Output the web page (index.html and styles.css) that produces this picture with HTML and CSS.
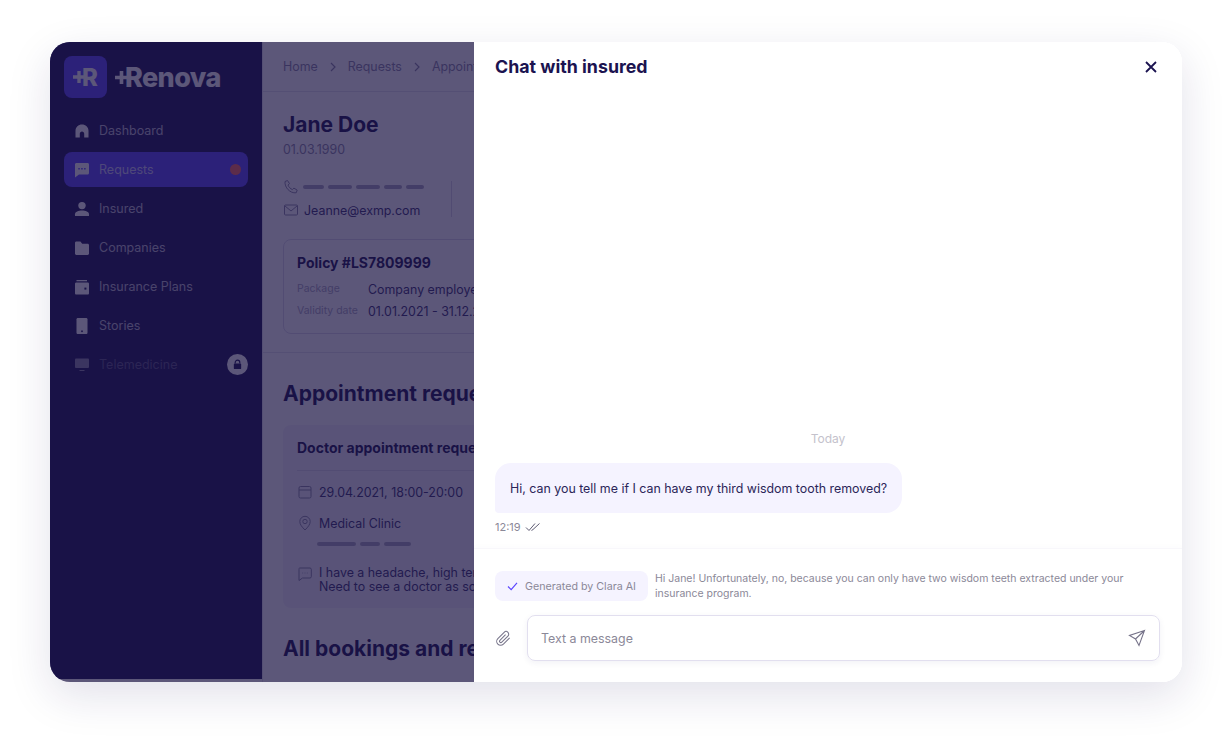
FILE: index.html
```html
<!DOCTYPE html>
<html lang="en">
<head>
  <meta charset="UTF-8">
  <title>Chat with insured</title>
  <link rel="stylesheet" href="styles.css">
</head>
<body>
  <div class="window">
    <aside class="sidebar">
      <div class="logo">
        <div class="logo-tile">
          <svg class="logo-plus-small" viewBox="0 0 10 10"><path d="M3.6 0h2.8v3.6H10v2.8H6.400V10H3.6V6.400H0V3.600h3.600z"/></svg>
          <span>R</span>
        </div>
        <div class="logo-name">
          <svg class="logo-plus" viewBox="0 0 10 10"><path d="M3.6 0h2.800v3.600H10v2.800H6.400V10H3.600V6.400H0V3.600h3.600z"/></svg>
          <span>Renova</span>
        </div>
      </div>
      <nav class="nav">
        <a class="nav-item" href="#">
          <svg viewBox="0 0 16 16"><path d="M8 1.500c-3.600 0-6.500 2.700-6.500 6.200v6.800h4.300v-3.800c0-1.200 1-2.200 2.200-2.200s2.200 1 2.200 2.200v3.800h4.300V7.700c0-3.500-2.900-6.200-6.500-6.200z"/></svg>
          Dashboard
        </a>
        <a class="nav-item active" href="#">
          <svg viewBox="0 0 16 16"><path d="M2.500 1h11C14.400 1 15 1.600 15 2.500v8.500c0 .9-.6 1.500-1.500 1.500H5L1 15.500v-13C1 1.600 1.600 1 2.500 1z"/><g class="dots"><rect x="4.300" y="6" width="1.500" height="1.500"/><rect x="7.200" y="6" width="1.500" height="1.500"/><rect x="10.100" y="6" width="1.500" height="1.500"/></g></svg>
          Requests
          <span class="nav-dot"></span>
        </a>
        <a class="nav-item" href="#">
          <svg viewBox="0 0 16 16"><circle cx="8" cy="4.600" r="3.700"/><path d="M1 15v-1.800c0-2.400 3.500-3.700 7-3.700s7 1.300 7 3.700V15z"/></svg>
          Insured
        </a>
        <a class="nav-item" href="#">
          <svg viewBox="0 0 16 16"><path d="M1 3c0-.8.600-1.400 1.400-1.400h4l1.800 2.200h5.400c.8 0 1.400.6 1.400 1.400v8.400c0 .8-.6 1.400-1.400 1.400H2.400c-.8 0-1.400-.6-1.400-1.400z"/></svg>
          Companies
        </a>
        <a class="nav-item" href="#">
          <svg viewBox="0 0 16 16"><path d="M2.500 1H13v1.300H2.500z"/><path d="M2.300 3.500h11.400c.8 0 1.300.6 1.300 1.300v9.400c0 .8-.5 1.300-1.300 1.300H2.300c-.8 0-1.300-.5-1.300-1.300V4.800c0-.7.500-1.300 1.300-1.300z"/><rect class="dots" x="10.400" y="8.600" width="2" height="2"/></svg>
          Insurance Plans
        </a>
        <a class="nav-item" href="#">
          <svg viewBox="0 0 16 16"><path d="M3.800 0h8.400c.7 0 1.300.6 1.300 1.300v13.400c0 .7-.6 1.300-1.300 1.300H3.800c-.7 0-1.300-.6-1.300-1.300V1.300C2.500.6 3.100 0 3.800 0z"/><rect class="dots" x="7.200" y="12.500" width="1.600" height="1.600"/></svg>
          Stories
        </a>
        <a class="nav-item disabled" href="#">
          <svg viewBox="0 0 16 16"><path d="M1.900 1.500h12.200c.5 0 .9.400.9.900v7.700c0 .5-.4.900-.9.900H1.900c-.5 0-.9-.4-.9-.9V2.400c0-.5.400-.9.900-.9z"/><rect x="5.500" y="13" width="5" height="1"/></svg>
          Telemedicine
          <span class="nav-lock">
            <svg viewBox="0 0 12 12"><path d="M3.500 5V3.700C3.500 2.300 4.600 1.300 6 1.300s2.500 1 2.500 2.400V5" class="lock-arc"/><rect x="2" y="5" width="8" height="6" rx="1"/></svg>
          </span>
        </a>
      </nav>
    </aside>

    <main class="main">
      <div class="crumbs">
        <span>Home</span>
        <svg class="crumb-arrow" viewBox="0 0 8 10"><path d="M2 1l4 4-4 4"/></svg>
        <span>Requests</span>
        <svg class="crumb-arrow" viewBox="0 0 8 10"><path d="M2 1l4 4-4 4"/></svg>
        <span>Appoint</span>
      </div>

      <section class="profile">
        <h1>Jane Doe</h1>
        <div class="birth">01.03.1990</div>
        <div class="contacts">
          <div class="contact-list">
            <div class="contact-row">
              <svg class="line-icon" viewBox="0 0 16 16"><path d="M2 2.500L4.500 1.500l2 3.200-1.500 1.400c.8 2 2.400 3.600 4.400 4.500l1.500-1.500 3.300 2-1 2.700C7 14.500 1.500 8.500 2 2.500z"/></svg>
              <div class="dashes">
                <i class="dash-a"></i><i class="dash-b"></i><i class="dash-b"></i><i class="dash-c"></i><i class="dash-c"></i>
              </div>
            </div>
            <div class="contact-row">
              <svg class="line-icon" viewBox="0 0 16 16"><rect x="1.500" y="3" width="13" height="10" rx="1"/><path d="M1.800 3.800L8 9l6.200-5.200"/></svg>
              <span>Jeanne@exmp.com</span>
            </div>
          </div>
          <div class="contact-divider"></div>
        </div>
        <div class="policy">
          <h3>Policy #LS7809999</h3>
          <div class="policy-row"><span class="policy-label">Package</span><span>Company employee</span></div>
          <div class="policy-row"><span class="policy-label">Validity date</span><span>01.01.2021 - 31.12.2021</span></div>
        </div>
      </section>

      <section class="requests">
        <h2>Appointment requests</h2>
        <div class="request-card">
          <h3>Doctor appointment request</h3>
          <div class="request-info">
            <div class="info-row">
              <svg class="line-icon" viewBox="0 0 16 16"><rect x="2" y="2.500" width="12" height="11.500" rx="1.500"/><path d="M2 6h12"/></svg>
              <span>29.04.2021, 18:00-20:00</span>
            </div>
            <div class="info-row">
              <svg class="line-icon" viewBox="0 0 16 16"><path d="M8 15C5 12 2.800 9.500 2.800 6.500a5.200 5.200 0 0 1 10.400 0C13.200 9.500 11 12 8 15z"/><circle cx="8" cy="6.500" r="2.200"/></svg>
              <span>Medical Clinic</span>
            </div>
            <div class="clinic-dashes"><i class="bar-a"></i><i class="bar-b"></i><i class="bar-c"></i></div>
            <div class="info-row note">
              <svg class="line-icon" viewBox="0 0 16 16"><path d="M3 2h10c.8 0 1.300.5 1.300 1.300v7.400c0 .8-.5 1.300-1.300 1.300H5.500L2 14.500V3.300C1.700 2.500 2.200 2 3 2z"/><path d="M5.500 7h.6M7.700 7h.6M9.900 7h.6"/></svg>
              <span>I have a headache, high ter<br>Need to see a doctor as so</span>
            </div>
          </div>
        </div>
        <h2 class="bookings">All bookings and requests</h2>
      </section>
    </main>

    <div class="overlay"></div>

    <section class="chat">
      <header class="chat-head">
        <h2>Chat with insured</h2>
        <button class="chat-close" type="button" aria-label="Close">
          <svg viewBox="0 0 12 12"><path d="M1 1l10 10M11 1L1 11"/></svg>
        </button>
      </header>
      <div class="chat-body">
        <div class="chat-day">Today</div>
        <div class="bubble">Hi, can you tell me if I can have my third wisdom tooth removed?</div>
        <div class="msg-meta">
          <span>12:19</span>
          <svg viewBox="0 0 16 10"><path d="M1 5.500l3 3L10 1.500M6.500 8.500L8 7.500 14.500 1.500"/></svg>
        </div>
      </div>
      <footer class="chat-foot">
        <div class="suggest">
          <div class="suggest-chip">
            <svg viewBox="0 0 12 10"><path d="M1 5l3.500 3.500L11 1"/></svg>
            Generated by Clara AI
          </div>
          <p>Hi Jane! Unfortunately, no, because you can only have two wisdom teeth extracted under your insurance program.</p>
        </div>
        <div class="compose">
          <svg class="clip" viewBox="0 0 18 18"><path d="M15.500 8.300l-6.600 6.600c-1.700 1.700-4.300 1.700-5.900 0-1.600-1.600-1.600-4.200 0-5.800l6.700-6.700c1.100-1.100 2.900-1.100 4 0s1.100 2.900 0 4l-6.500 6.500c-.6.600-1.400.6-2 0-.5-.5-.5-1.400 0-1.900l6-6"/></svg>
          <div class="compose-box">
            <span>Text a message</span>
            <svg class="send" viewBox="0 0 18 18"><path d="M16.500 1.500L1.500 6.500l6 3.500 3.500 6.500zM16.500 1.500L7.500 10"/></svg>
          </div>
        </div>
      </footer>
    </section>
  </div>
</body>
</html>
```

FILE: styles.css
```css
* {
  box-sizing: border-box;
}
html, body {
  height: 100%;
}
body {
  margin: 0;
  padding: 42px 50px 59px;
  background: #fff;
  font-family: Inter, "Liberation Sans", sans-serif;
  color: #1b1350;
  overflow: hidden;
}
h1, h2, h3, p {
  margin: 0;
}
svg {
  display: block;
  flex: none;
}

.window {
  position: relative;
  display: flex;
  height: 640px;
  border-radius: 20px;
  overflow: hidden;
  background: #fff;
  box-shadow: 0 14px 44px rgba(30,20,90,.13);
}

/* sidebar */
.sidebar {
  width: 212px;
  flex: none;
  margin-bottom: 3px;
  padding: 14px 14px 0;
  background: #1a1254;
}
.logo {
  display: flex;
  align-items: center;
  gap: 8px;
  margin-bottom: 15px;
}
.logo-tile {
  width: 43px;
  height: 42px;
  display: flex;
  align-items: center;
  justify-content: center;
  border-radius: 8px;
  background: #5a45ff;
  color: #fff;
  font-weight: 800;
  font-size: 24px;
}
.logo-plus-small {
  width: 12px;
  height: 12px;
  margin-right: -3px;
  fill: #fff;
}
.logo-name {
  display: flex;
  align-items: center;
  color: #fff;
  font-weight: 800;
  font-size: 27px;
  letter-spacing: -.6px;
}
.logo-plus {
  width: 13px;
  height: 13px;
  margin-right: -3px;
  fill: #fff;
}
.nav {
  display: flex;
  flex-direction: column;
  gap: 4px;
}
.nav-item {
  display: flex;
  align-items: center;
  gap: 9px;
  height: 35px;
  padding: 0 7px 0 10px;
  border-radius: 8px;
  color: rgba(255,255,255,.72);
  font-size: 12.500px;
  text-decoration: none;
}
.nav-item svg {
  width: 16px;
  height: 16px;
  fill: #fff;
}
.nav-item .dots {
  fill: #1a1254;
}
.nav-item.active {
  background: #5a45ff;
}
.nav-item.active .dots {
  fill: #5a45ff;
}
.nav-dot {
  width: 11px;
  height: 11px;
  margin-left: auto;
  border-radius: 50%;
  background: #ff6b5e;
}
.nav-item.disabled {
  color: rgba(255,255,255,.28);
  padding-right: 0;
}
.nav-item.disabled > svg {
  opacity: .5;
}
.nav-lock {
  width: 21px;
  height: 21px;
  margin-left: auto;
  display: flex;
  align-items: center;
  justify-content: center;
  border-radius: 50%;
  background: #fff;
}
.nav-lock svg {
  width: 11px;
  height: 11px;
  fill: #1a1254;
}
.nav-lock .lock-arc {
  fill: none;
  stroke: #1a1254;
  stroke-width: 1.300;
}

/* page under the overlay */
.main {
  flex: 1;
  min-width: 0;
  background: #fff;
  border-left: 1px solid #e4e2ee;
  white-space: nowrap;
  overflow: hidden;
  font-size: 12.400px;
  color: #3a3270;
}
.crumbs {
  display: flex;
  align-items: center;
  gap: 11px;
  height: 50px;
  padding: 0 20px;
  border-bottom: 1px solid #e4e2ee;
  color: #8b88a6;
}
.crumb-arrow {
  width: 8px;
  height: 10px;
  fill: none;
  stroke: #8b88a6;
  stroke-width: 1.200;
}
.line-icon {
  width: 16px;
  height: 16px;
  fill: none;
  stroke: #8b88a6;
  stroke-width: 1;
}
.profile {
  padding: 20px 20px 18px;
  border-bottom: 1px solid #e4e2ee;
}
.profile h1 {
  font-size: 21px;
  line-height: 26px;
  font-weight: 700;
  color: #1b1350;
}
.birth {
  margin-top: 4px;
  line-height: 16px;
  color: #8b88a6;
}
.contacts {
  display: flex;
  align-items: center;
  gap: 27px;
  margin-top: 21px;
}
.contact-list {
  display: flex;
  flex-direction: column;
  gap: 7px;
}
.contact-row {
  display: flex;
  align-items: center;
  gap: 4px;
  height: 16px;
}
.contact-row span {
  margin-left: 1px;
}
.dashes {
  display: flex;
  gap: 4px;
}
.dashes i, .clinic-dashes i {
  display: block;
  height: 3.500px;
  border-radius: 2px;
  background: #aaa7c0;
}
.dash-a { width: 21px; }
.dash-b { width: 24px; }
.dash-c { width: 18px; }
.contact-divider {
  width: 1px;
  height: 36px;
  background: #d8d6e6;
}
.policy {
  width: 400px;
  height: 95px;
  margin-top: 21px;
  padding: 14px 13px;
  border: 1px solid #dcdaea;
  border-radius: 8px;
}
.policy h3, .request-card h3 {
  font-size: 14px;
  line-height: 18px;
  font-weight: 700;
  color: #1b1350;
}
.policy-row {
  display: flex;
  align-items: flex-start;
  margin-top: 4px;
  line-height: 18px;
}
.policy-row:first-of-type {
  margin-top: 9px;
}
.policy-label {
  width: 71px;
  color: #aaa7c0;
  font-size: 10.500px;
  line-height: 16px;
}
.requests {
  padding: 28px 20px 0;
}
.requests h2 {
  font-size: 21px;
  line-height: 26px;
  font-weight: 700;
  color: #1b1350;
}
.request-card {
  width: 400px;
  height: 183px;
  margin-top: 18px;
  padding: 14px;
  border-radius: 8px;
  background: #f3f2fa;
}
.request-info {
  margin-top: 13px;
  padding-top: 13px;
  border-top: 1px solid #dcdaea;
}
.info-row {
  display: flex;
  align-items: center;
  gap: 6px;
  height: 16px;
  margin-bottom: 15px;
}
.clinic-dashes {
  display: flex;
  gap: 4px;
  margin: -4px 0 0 20px;
}
.bar-a { width: 39px; }
.bar-b { width: 20px; }
.bar-c { width: 27px; }
.info-row.note {
  align-items: flex-start;
  height: auto;
  margin-top: 20px;
  line-height: 14px;
}
.requests h2.bookings {
  margin-top: 28px;
}

.overlay {
  position: absolute;
  top: 0;
  bottom: 0;
  left: 0;
  right: 708px;
  background: rgba(26,18,66,.71);
}

/* chat drawer */
.chat {
  position: absolute;
  top: 0;
  right: 0;
  bottom: 0;
  width: 708px;
  display: flex;
  flex-direction: column;
  background: #fff;
}
.chat-head {
  display: flex;
  align-items: center;
  justify-content: space-between;
  height: 48px;
  padding: 0 25px 0 21px;
}
.chat-head h2 {
  font-size: 17.800px;
  font-weight: 700;
  color: #1b1350;
}
.chat-close {
  padding: 0;
  margin-top: 2px;
  border: none;
  background: none;
}
.chat-close svg {
  width: 12px;
  height: 12px;
  fill: none;
  stroke: #1b1350;
  stroke-width: 1.800;
}
.chat-body {
  flex: 1;
  display: flex;
  flex-direction: column;
  justify-content: flex-end;
  align-items: flex-start;
  padding: 0 21px 14px;
}
.chat-day {
  align-self: center;
  margin-bottom: 16px;
  font-size: 12px;
  line-height: 16px;
  color: #c4c2cc;
}
.bubble {
  padding: 18px 15px 16px;
  border-radius: 16px 16px 16px 4px;
  background: #f5f3ff;
  font-size: 12.400px;
  line-height: 16px;
  color: #2b2558;
}
.msg-meta {
  display: flex;
  align-items: center;
  gap: 4px;
  margin-top: 7px;
  font-size: 11px;
  line-height: 14px;
  color: #8b8898;
}
.msg-meta svg {
  width: 16px;
  height: 10px;
  fill: none;
  stroke: #5f5c74;
  stroke-width: 1;
}
.chat-foot {
  height: 134px;
  padding: 22px 22px 0 21px;
  border-top: 1px solid #f8f7fb;
  box-shadow: 0 -2px 6px rgba(40,30,110,.015);
}
.suggest {
  display: flex;
  align-items: center;
  gap: 7px;
  height: 30px;
}
.suggest-chip {
  display: flex;
  align-items: center;
  gap: 7px;
  height: 30px;
  padding: 0 12px;
  flex: none;
  border-radius: 8px;
  background: #f5f3ff;
  font-size: 10.700px;
  color: #8b8898;
}
.suggest-chip svg {
  width: 11px;
  height: 9px;
  fill: none;
  stroke: #5a45ff;
  stroke-width: 1.300;
}
.suggest p {
  font-size: 10.500px;
  line-height: 15px;
  color: #8b8898;
  max-width: 490px;
}
.compose {
  display: flex;
  align-items: center;
  gap: 15px;
  margin-top: 14px;
}
.clip {
  width: 17px;
  height: 17px;
  fill: none;
  stroke: #77748a;
  stroke-width: 1.100;
}
.compose-box {
  flex: 1;
  display: flex;
  align-items: center;
  justify-content: space-between;
  height: 46px;
  padding: 0 13px;
  border: 1px solid #e2dfef;
  border-radius: 8px;
  box-shadow: 0 2px 6px rgba(40,30,110,.06);
  font-size: 12.400px;
  color: #8b8898;
}
.send {
  width: 18px;
  height: 18px;
  fill: none;
  stroke: #77748a;
  stroke-width: 1.100;
}
```
